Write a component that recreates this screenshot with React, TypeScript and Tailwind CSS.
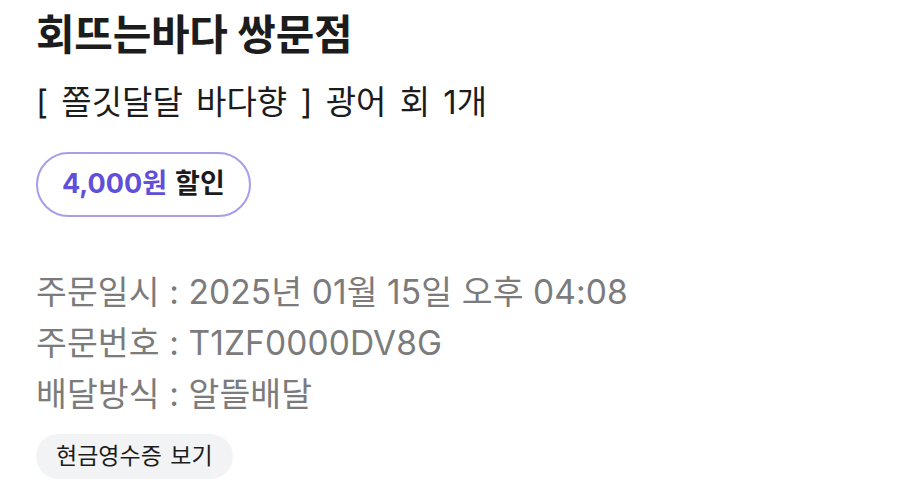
export default function App() {
  return (
    <div
      className="w-[900px] h-[500px] bg-white overflow-hidden pl-[36px] pt-[10px]"
      style={{ fontFamily: 'Inter, "Noto Sans CJK KR", "Noto Sans", sans-serif' }}
    >
      <h1 className="text-[42px] leading-[50px] font-bold text-[#1c1c1c] tracking-[-0.3px]">회뜨는바다 쌍문점</h1>
      <p className="mt-[22px] text-[33px] leading-[40px] text-[#1c1c1c] [word-spacing:4px]">[ 쫄깃달달 바다향 ] 광어 회 1개</p>
      <div className="mt-[30px] inline-flex items-center h-[65px] px-[24px] rounded-full border-2 border-[#a99cea] text-[27px] font-bold">
        <span className="text-[#5f4fd9]">4,000원</span>
        <span className="ml-[8px] text-[#1c1c1c]">할인</span>
      </div>
      <div className="mt-[50px] flex flex-col text-[33.5px] leading-[51px] text-[#7b7b7b] tracking-[0.1px]">
        <div>주문일시 : 2025년 01월 15일 오후 04:08</div>
        <div>주문번호 : T1ZF0000DV8G</div>
        <div>배달방식 : 알뜰배달</div>
      </div>
      <div className="mt-[14px] inline-flex items-center h-[45px] px-[20px] rounded-full bg-[#f2f3f5] text-[23px] text-[#1c1c1c] [word-spacing:2px]">
        현금영수증 보기
      </div>
    </div>
  );
}
